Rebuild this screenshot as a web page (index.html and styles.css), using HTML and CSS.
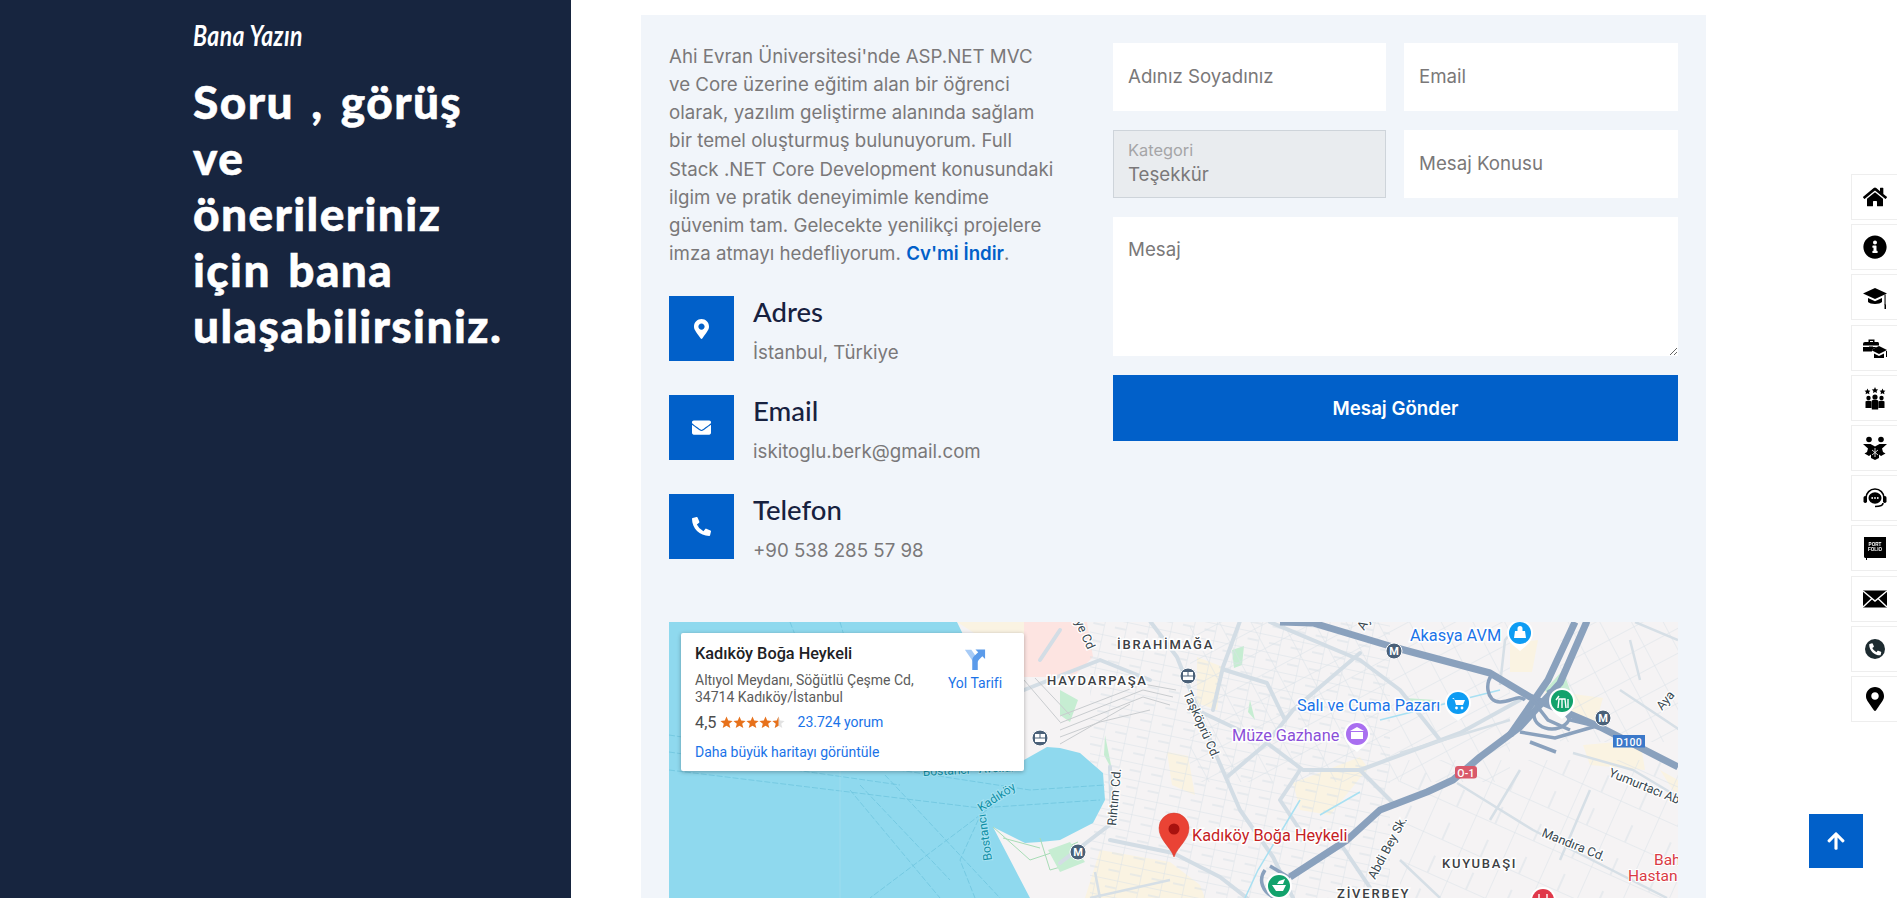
FILE: index.html
```html
<!DOCTYPE html>
<html lang="tr">
<head>
<meta charset="utf-8">
<title>İletişim</title>
<link rel="stylesheet" href="styles.css">
</head>
<body>
<div class="page">
  <aside class="side">
    <div class="eyebrow">Bana Yazın</div>
    <h1 class="side-title">Soru , görüş<br>ve<br>önerileriniz<br>için bana<br>ulaşabilirsiniz.</h1>
  </aside>
  <main class="main">
    <section class="card">
      <div class="top">
        <div class="about">
          <p class="bio">Ahi Evran Üniversitesi'nde ASP.NET MVC ve Core üzerine eğitim alan bir öğrenci olarak, yazılım geliştirme alanında sağlam bir temel oluşturmuş bulunuyorum. Full Stack .NET Core Development konusundaki ilgim ve pratik deneyimimle kendime güvenim tam. Gelecekte yenilikçi projelere imza atmayı hedefliyorum. <a class="cv" href="#">Cv'mi İndir</a>.</p>
          <div class="contacts">
            <div class="contact">
              <div class="c-icon"><svg class="ci-pin" viewBox="0 0 384 512"><path d="M172.268 501.67C26.97 291.031 0 269.413 0 192 0 85.961 85.961 0 192 0s192 85.961 192 192c0 77.413-26.97 99.031-172.268 309.67-9.535 13.774-29.93 13.773-39.464 0zM192 272c44.183 0 80-35.817 80-80s-35.817-80-80-80-80 35.817-80 80 35.817 80 80 80z"/></svg></div>
              <div><h4 class="c-title">Adres</h4><div class="c-text">İstanbul, Türkiye</div></div>
            </div>
            <div class="contact">
              <div class="c-icon"><svg class="ci-box" viewBox="0 0 512 512"><path d="M502.3 190.8c3.9-3.1 9.7-.2 9.7 4.7V400c0 26.5-21.5 48-48 48H48c-26.5 0-48-21.5-48-48V195.6c0-5 5.7-7.8 9.7-4.7 22.4 17.4 52.1 39.5 154.1 113.6 21.1 15.4 56.7 47.8 92.2 47.6 35.7.3 72-32.8 92.3-47.6 102-74.1 131.6-96.3 154-113.7zM256 320c23.2.4 56.6-29.2 73.4-41.4 132.7-96.3 142.8-104.7 173.4-128.7 5.8-4.5 9.2-11.5 9.2-18.9v-19c0-26.5-21.5-48-48-48H48C21.5 64 0 85.5 0 112v19c0 7.4 3.4 14.3 9.2 18.9 30.6 23.9 40.7 32.4 173.4 128.7 16.8 12.2 50.2 41.8 73.4 41.4z"/></svg></div>
              <div><h4 class="c-title">Email</h4><div class="c-text">iskitoglu.berk@gmail.com</div></div>
            </div>
            <div class="contact">
              <div class="c-icon"><svg class="ci-box" viewBox="0 0 512 512"><path d="M497.39 361.8l-112-48a24 24 0 0 0-28 6.9l-49.6 60.6A370.66 370.66 0 0 1 130.6 204.11l60.6-49.6a23.94 23.94 0 0 0 6.9-28l-48-112A24.16 24.16 0 0 0 122.6.61l-104 24A24 24 0 0 0 0 48c0 256.5 207.9 464 464 464a24 24 0 0 0 23.4-18.6l24-104a24.29 24.29 0 0 0-14.01-27.6z"/></svg></div>
              <div><h4 class="c-title">Telefon</h4><div class="c-text">+90 538 285 57 98</div></div>
            </div>
          </div>
        </div>
        <form class="form">
          <input class="field" type="text" placeholder="Adınız Soyadınız">
          <input class="field" type="text" placeholder="Email">
          <div class="select-box"><span class="select-label">Kategori</span><span class="select-value">Teşekkür</span></div>
          <input class="field" type="text" placeholder="Mesaj Konusu">
          <textarea class="field area" placeholder="Mesaj"></textarea>
          <button class="send" type="button">Mesaj Gönder</button>
        </form>
      </div>

      <div class="map">
        <svg class="map-svg" viewBox="669 622 1009 276" xmlns="http://www.w3.org/2000/svg">
          <defs>
            <pattern id="streetsA" width="22" height="17" patternUnits="userSpaceOnUse" patternTransform="rotate(12)">
              <path class="st" d="M0 0H22M0 0V17M11 8H22"/>
            </pattern>
            <pattern id="streetsB" width="28" height="22" patternUnits="userSpaceOnUse" patternTransform="rotate(-28)">
              <path class="st" d="M0 0H28M0 0V22"/>
            </pattern>
            <pattern id="streetsC" width="42" height="36" patternUnits="userSpaceOnUse" patternTransform="rotate(24)">
              <path class="st" d="M0 0H42M0 0V36M21 18V36"/>
            </pattern>
          </defs>
          <rect class="land" x="669" y="622" width="1009" height="276"/>
          <path class="pink" d="M1024 622H1087L1093 657L1073 677H1024Z"/>
          <path class="beige" d="M957 622H1024V640H985Z"/>
          <path class="beige" d="M1197 657L1223 667L1217 710L1197 703ZM1167 752L1188 756L1195 795L1172 785ZM1293 783L1360 757L1368 768L1330 815L1300 810ZM1100 850L1170 862L1200 885L1205 898H1085ZM1510 643L1538 640L1532 672L1510 672ZM1543 690L1603 698L1596 722L1560 712ZM1583 745L1640 740L1645 770L1590 765ZM1660 770L1678 780V798Z"/>
          <path class="green" d="M1232 650L1244 646L1242 665L1234 668ZM1405 698L1435 700L1420 712ZM1060 690L1078 700L1070 722L1060 715ZM1250 700L1255 720L1248 712ZM1105 735L1112 770L1104 755ZM1563 670L1570 690L1552 700L1545 690Z"/>
          <g>
            <rect class="fill-a" x="1090" y="622" width="300" height="276"/>
            <rect class="fill-b" x="1190" y="622" width="320" height="160"/>
            <rect class="fill-c" x="1400" y="760" width="278" height="138"/>
            <rect class="fill-b" x="1560" y="622" width="118" height="120"/>
          </g>

          <path class="water" d="M669 622H957L1024 760L1047 747L1060 748L1080 753L1103 773L1105 800L1093 823L1060 840L1040 842L1025 843L993 827L1030 898H669Z"/>
          <path class="ferry" d="M669 735L1030 790L1105 785M669 770L980 808L1100 800M850 790L940 898M885 775L1000 898M860 785L950 880M1000 800L870 898M985 805L960 860L975 898M669 752L900 785M840 622L860 690M790 622L805 660"/>
          <path class="ferry-v" d="M840 770V898"/>
          <path class="shore" d="M993 827L1030 860L1060 850L1078 842M1003 838L1040 848M1040 838L1050 870L1078 862"/>
          <path class="green2" d="M1048 850L1070 842L1085 862L1060 872Z"/>

          <g class="road-l">
            <path d="M1150 621L1177 657L1217 757L1240 810L1273 857L1293 898"/>
            <path d="M1240 621L1223 667L1213 710"/>
            <path d="M1360 653L1293 710L1267 743L1227 777"/>
            <path d="M1203 713L1267 743L1303 770L1360 770"/>
            <path d="M1360 770L1460 733L1520 700"/>
            <path d="M1110 840L1173 853L1220 877L1247 898"/>
            <path d="M1110 767L1112 823L1060 863"/>
            <path d="M1360 770L1393 803M1300 770L1280 800L1300 830M1340 843L1377 898"/>
            <path d="M1225 670L1267 683L1285 720M1270 622L1360 660L1400 690L1440 740"/>
            <path d="M1040 660L1060 630M1024 690L1100 660L1150 680"/>
          </g>
          <g class="road-m">
            <path d="M1457 783L1533 830L1667 898"/>
            <path d="M1573 753L1633 770L1678 797"/>
            <path d="M1400 753L1510 720"/>
            <path d="M1500 685L1505 640L1520 622M1635 622L1678 640M1630 640L1640 680M1680 730L1620 690"/>
            <path d="M1170 880L1090 898M1095 872L1100 898M1400 860L1440 898M1520 770L1490 820M1590 790L1560 860"/>
          </g>
          <path class="rail" d="M1060 723L1143 690L1173 697M1060 730L1143 697L1170 705M1060 716L1143 684L1176 690M1060 737L1100 722L1150 710M1024 680L1060 722M1035 678L1070 715M1060 744L1130 704"/>
          <path class="river" d="M1245 898L1258 870L1300 800M1360 792L1320 815M1380 720L1500 690"/>

          <g class="hw">
            <path d="M1280 622L1313 623L1393 647L1490 673L1530 697L1600 727L1678 767"/>
            <path d="M1290 877L1347 840L1380 810L1427 792L1453 780L1480 757L1520 727L1560 683L1587 621"/>
            <path d="M1575 622L1548 680L1510 735"/>
          </g>
          <g class="hw-t">
            <path d="M1494 673C1484 680 1486 702 1500 702C1512 702 1518 694 1525 700"/>
            <ellipse cx="1552" cy="715" rx="18" ry="14"/>
            <path d="M1520 732L1555 738L1600 725M1530 697L1548 720L1570 730M1548 690L1570 720L1600 727M1530 742L1556 752"/>
            <path d="M1265 870C1258 880 1262 892 1275 898M1270 866L1290 878"/>
          </g>

          <text class="l-area" x="1117" y="649">İBRAHİMAĞA</text>
          <text class="l-area" x="1047" y="685">HAYDARPAŞA</text>
          <text class="l-area" x="1442" y="868">KUYUBAŞI</text>
          <text class="l-area" x="1337" y="898">ZİVERBEY</text>

          <text class="l-blue" x="1410" y="641">Akasya AVM</text>
          <text class="l-blue" x="1297" y="711">Salı ve Cuma Pazarı</text>
          <text class="l-purple" x="1232" y="741">Müze Gazhane</text>
          <text class="l-red" x="1192" y="841">Kadıköy Boğa Heykeli</text>
          <text class="l-hosp" x="1654" y="865">Bahçeşehir</text>
          <text class="l-hosp" x="1628" y="881">Hastanesi</text>

          <text class="l-road" transform="translate(1183 693) rotate(66)">Taşköprü Cd.</text>
          <text class="l-road" transform="translate(1116 826) rotate(-85)">Rıhtım Cd.</text>
          <text class="l-road" transform="translate(1375 880) rotate(-62)">Abdi Bey Sk.</text>
          <text class="l-road" transform="translate(1075 622) rotate(66)">ye Cd</text>
          <text class="l-road" transform="translate(1364 631) rotate(-60)">Ay</text>
          <text class="l-road" transform="translate(1662 711) rotate(-50)">Aya</text>
          <text class="l-road" transform="translate(1608 776) rotate(22)">Yumurtacı Abdi</text>
          <text class="l-road" transform="translate(1541 836) rotate(22)">Mandıra Cd.</text>
          <text class="l-sea" transform="translate(923 776) rotate(-3)">Bostancı - Avcılar</text>
          <text class="l-sea" transform="translate(981 812) rotate(-33)">Kadıköy</text>
          <text class="l-sea" transform="translate(992 860) rotate(-98)">Bostancı</text>

          <g class="badge-b"><rect x="1613" y="735" width="32" height="12.5"/><text class="badge-t" x="1629" y="745.5">D100</text></g>
          <g class="badge-r"><rect x="1455" y="766" width="22" height="12.5" rx="3"/><text class="badge-t" x="1466" y="776.5">O-1</text></g>

          <g class="metro">
            <circle cx="1394" cy="651" r="8"/><circle cx="1603" cy="718" r="8"/><circle cx="1078" cy="852" r="8"/>
            <text class="m-t" x="1394" y="655">M</text><text class="m-t" x="1603" y="722">M</text><text class="m-t" x="1078" y="856">M</text>
            <circle cx="1188" cy="676" r="8"/><circle cx="1040" cy="738" r="8"/>
            <path class="train" d="M1183 672H1193V680H1183ZM1035 734H1045V742H1035Z"/>
            <path class="train-l" d="M1183 676H1193M1188 672V676M1035 738H1045M1040 734V738"/>
          </g>

          <g>
            <path class="pin-w" d="M1507 633A13 13 0 0 1 1533 633C1533 641 1526 646 1520 651C1514 646 1507 641 1507 633Z"/>
            <circle class="p-blue" cx="1520" cy="633" r="11"/>
            <path class="p-ic" d="M1515 631H1525L1526 638H1514ZM1517.5 631V628.5A2.5 2.5 0 0 1 1522.5 628.5V631" />
            <path class="pin-w" d="M1445 703A13 13 0 0 1 1471 703C1471 711 1464 716 1458 721C1452 716 1445 711 1445 703Z"/>
            <circle class="p-blue" cx="1458" cy="703" r="11"/>
            <path class="p-ic" d="M1452 698H1454L1456 705H1463L1465 700H1455Z"/><circle class="p-ic" cx="1456.5" cy="708" r="1.4"/><circle class="p-ic" cx="1462" cy="708" r="1.4"/>
            <path class="pin-w" d="M1344 734A13 13 0 0 1 1370 734C1370 742 1363 747 1357 752C1351 747 1344 742 1344 734Z"/>
            <circle class="p-purple" cx="1357" cy="734" r="11"/>
            <path class="p-ic" d="M1350 731L1357 727L1364 731ZM1351 732H1363V739H1351Z"/>
            <path class="pin-w" d="M1549 701A13 13 0 0 1 1575 701C1575 709 1568 714 1562 719C1556 714 1549 709 1549 701Z"/>
            <circle class="p-green" cx="1562" cy="701" r="11"/>
            <path class="p-ln" d="M1558 708L1559 699H1565L1566 708M1562 699V708M1556 700L1559 696M1568 699V708"/>
            <circle class="pin-w" cx="1279" cy="886" r="13"/>
            <circle class="p-green" cx="1279" cy="886" r="11"/>
            <path class="p-ic" d="M1272 885H1286L1283 891H1276ZM1279 881L1285 879L1283 884H1277Z"/>
            <circle class="pin-w" cx="1543" cy="900" r="13"/>
            <circle class="p-red" cx="1543" cy="900" r="11"/>
            <path class="p-ln" d="M1539 894V898M1547 894V898"/>
          </g>

          <path class="marker" d="M1174 857C1170 846 1159 840 1159 828A15 15 0 0 1 1189 828C1189 840 1178 846 1174 857Z"/>
          <circle class="marker-dot" cx="1174" cy="829" r="5.5"/>
        </svg>

        <div class="place">
          <div class="place-main">
            <div class="place-name">Kadıköy Boğa Heykeli</div>
            <div class="place-addr">Altıyol Meydanı, Söğütlü Çeşme Cd,<br>34714 Kadıköy/İstanbul</div>
            <div class="rating">
              <span class="rate">4,5</span>
              <svg class="stars" viewBox="0 0 65 13">
                <path class="s-on" d="M6.5 0.5L8.2 4.6L12.6 5L9.2 7.8L10.3 12.1L6.5 9.8L2.7 12.1L3.8 7.8L0.4 5L4.8 4.6Z"/>
                <path class="s-on" d="M19.5 0.5L21.2 4.6L25.6 5L22.2 7.8L23.3 12.1L19.5 9.8L15.7 12.1L16.8 7.8L13.4 5L17.8 4.6Z"/>
                <path class="s-on" d="M32.5 0.5L34.2 4.6L38.6 5L35.2 7.8L36.3 12.1L32.5 9.8L28.7 12.1L29.8 7.8L26.4 5L30.8 4.6Z"/>
                <path class="s-on" d="M45.5 0.5L47.2 4.6L51.6 5L48.2 7.8L49.3 12.1L45.5 9.8L41.7 12.1L42.8 7.8L39.4 5L43.8 4.6Z"/>
                <path class="s-off" d="M58.5 0.5L60.2 4.6L64.6 5L61.2 7.8L62.3 12.1L58.5 9.8L54.7 12.1L55.8 7.8L52.4 5L56.8 4.6Z"/>
                <path class="s-on" d="M58.5 0.5V9.8L54.7 12.1L55.8 7.8L52.4 5L56.8 4.6Z"/>
              </svg>
              <a class="g-link reviews" href="#">23.724 yorum</a>
            </div>
            <a class="g-link bigger" href="#">Daha büyük haritayı görüntüle</a>
          </div>
          <a class="dirs" href="#">
            <svg class="dirs-ic" viewBox="0 0 24 24"><path class="d-a" d="M1 2H8L13 9L10 15Z"/><path class="d-b" d="M9 24V14C9 11 10 10 12 8L15.5 4.5L12.5 1.5H23V12L20 9L16.5 12.5C15.5 13.5 15 14.5 15 16V24Z"/></svg>
            <span>Yol Tarifi</span>
          </a>
        </div>
      </div>
    </section>
  </main>
</div>

<nav class="rail-nav">
  <a class="rail-item"><svg class="ri" viewBox="0 0 576 512"><path d="M280.37 148.26L96 300.11V464a16 16 0 0 0 16 16l112.06-.29a16 16 0 0 0 15.92-16V368a16 16 0 0 1 16-16h64a16 16 0 0 1 16 16v95.64a16 16 0 0 0 16 16.05L464 480a16 16 0 0 0 16-16V300L295.67 148.26a12.19 12.19 0 0 0-15.3 0zM571.6 251.47L488 182.56V44.05a12 12 0 0 0-12-12h-56a12 12 0 0 0-12 12v72.61L318.47 43a48 48 0 0 0-61 0L4.34 251.47a12 12 0 0 0-1.6 16.9l25.5 31A12 12 0 0 0 45.15 301l235.22-193.74a12.19 12.19 0 0 1 15.3 0L530.9 301a12 12 0 0 0 16.9-1.6l25.5-31a12 12 0 0 0-1.7-16.93z"/></svg></a>
  <a class="rail-item"><svg class="ri" viewBox="0 0 512 512"><path d="M256 8C119.043 8 8 119.083 8 256c0 136.997 111.043 248 248 248s248-111.003 248-248C504 119.083 392.957 8 256 8zm0 110c23.196 0 42 18.804 42 42s-18.804 42-42 42-42-18.804-42-42 18.804-42 42-42zm56 254c0 6.627-5.373 12-12 12h-88c-6.627 0-12-5.373-12-12v-24c0-6.627 5.373-12 12-12h12v-64h-12c-6.627 0-12-5.373-12-12v-24c0-6.627 5.373-12 12-12h64c6.627 0 12 5.373 12 12v100h12c6.627 0 12 5.373 12 12v24z"/></svg></a>
  <a class="rail-item"><svg class="ri" viewBox="0 0 24 24"><path d="M12 3L0 8.5L12 14L24 8.5Z"/><path d="M5 13V17C7 19.5 17 19.5 19 17V13L12 16.2Z"/><path d="M21.5 10V19.5H23V24H21.5Z"/><path d="M21.5 9.5H22.6V20H21.5Z"/></svg></a>
  <a class="rail-item"><svg class="ri" viewBox="0 0 24 24"><path d="M3 6H15A2 2 0 0 1 16 8V9.5H0V8A2 2 0 0 1 2 6ZM5.5 6V3.5H11.5V6H10V5H7V6ZM0 11H6V10.5H10V11H14L9 13.5V15.5H0Z"/><path d="M16 10L24 14L16 18L8 14Z"/><path d="M11 17.5V22H21V17.5L16 20Z"/><path d="M23 15V21H24V15Z"/></svg></a>
  <a class="rail-item"><svg class="ri" viewBox="0 0 24 24"><path d="M12 1L13 3.2L15.2 3.4L13.6 4.9L14 7L12 6L10 7L10.4 4.9L8.8 3.4L11 3.2ZM4.5 2.5L5.4 4.5L7.5 4.7L6 6.1L6.4 8.2L4.5 7.2L2.6 8.2L3 6.1L1.5 4.7L3.6 4.5ZM19.5 2.5L20.4 4.5L22.5 4.7L21 6.1L21.4 8.2L19.5 7.2L17.6 8.2L18 6.1L16.5 4.7L18.6 4.5Z"/><circle cx="5.5" cy="12" r="2.2"/><circle cx="18.5" cy="12" r="2.2"/><circle cx="12" cy="11" r="2.6"/><path d="M2.5 15.5C3 14.5 8 14.5 8.5 15.5V22H2.5ZM15.5 15.5C16 14.5 21 14.5 21.5 15.5V22H15.5ZM8.8 14.5C9.5 13.5 14.5 13.5 15.2 14.5V23.5H8.8Z"/></svg></a>
  <a class="rail-item"><svg class="ri" viewBox="0 0 24 24"><circle cx="6" cy="3.5" r="2.8"/><circle cx="18" cy="3.5" r="2.8"/><path d="M0 8H7.5L12 10.5L16.5 8H24L19 12.5L20 16L22.5 17.5L18 20L16 18.5V22L12 24L8 22V18.5L6 20L1.5 17.5L4 16L5 12.5Z"/><path class="ri-w" d="M9 14L15 19M15 14L9 19M12 12V21"/></svg></a>
  <a class="rail-item"><svg class="ri" viewBox="0 0 24 24"><path class="ri-s" d="M3 12A9 9 0 0 1 21 12"/><rect x="0.5" y="10" width="3.5" height="7" rx="1.7"/><rect x="20" y="10" width="3.5" height="7" rx="1.7"/><ellipse cx="12" cy="12" rx="6.5" ry="5.8"/><circle class="ri-wf" cx="9.2" cy="12" r=".9"/><circle class="ri-wf" cx="12" cy="12" r=".9"/><circle class="ri-wf" cx="14.8" cy="12" r=".9"/><path class="ri-s" d="M20 17C20 20 16 20.5 12 20.5"/></svg></a>
  <a class="rail-item"><svg class="ri" viewBox="0 0 24 24"><path d="M1 1H23V22H4V24H3V22C2 22 1 21.5 1 20.5Z"/><text class="ri-t" x="12" y="9.5">PORT</text><text class="ri-t" x="12" y="14.5">FOLIO</text></svg></a>
  <a class="rail-item"><svg class="ri" viewBox="0 0 24 24"><path d="M0 3.5H24V20.5H0Z"/><path class="ri-w2" d="M0 4L12 14L24 4M0 20L9 11.5M24 20L15 11.5"/></svg></a>
  <a class="rail-item"><svg class="ri" viewBox="0 0 24 24"><circle class="ri-dark" cx="12" cy="12" r="10"/><path class="ri-wf" transform="translate(6.2 6.3) scale(0.0235)" d="M497.39 361.8l-112-48a24 24 0 0 0-28 6.9l-49.6 60.6A370.66 370.66 0 0 1 130.6 204.11l60.6-49.6a23.94 23.94 0 0 0 6.9-28l-48-112A24.16 24.16 0 0 0 122.6.61l-104 24A24 24 0 0 0 0 48c0 256.5 207.9 464 464 464a24 24 0 0 0 23.4-18.6l24-104a24.29 24.29 0 0 0-14.01-27.6z"/></svg></a>
  <a class="rail-item"><svg class="ri" viewBox="0 0 384 512"><path d="M172.268 501.67C26.97 291.031 0 269.413 0 192 0 85.961 85.961 0 192 0s192 85.961 192 192c0 77.413-26.97 99.031-172.268 309.67-9.535 13.774-29.93 13.773-39.464 0zM192 272c44.183 0 80-35.817 80-80s-35.817-80-80-80-80 35.817-80 80 35.817 80 80 80z"/></svg></a>
</nav>

<a class="to-top" href="#"><svg class="tt-ic" viewBox="0 0 448 512"><path d="M34.9 289.5l-22.2-22.2c-9.4-9.4-9.4-24.6 0-33.9L207 39c9.4-9.4 24.6-9.4 33.9 0l194.3 194.3c9.4 9.4 9.4 24.6 0 33.9L413 289.4c-9.5 9.5-25 9.3-34.3-.4L264 168.6V456c0 13.3-10.7 24-24 24h-32c-13.3 0-24-10.7-24-24V168.6L69.2 289.1c-9.3 9.8-24.8 10-34.3.4z"/></svg></a>
</body>
</html>
```
FILE: styles.css
```css
* { box-sizing: border-box; }
html, body { margin: 0; height: 100%; overflow: hidden; background: #fff; }
body { font-family: "Inter", "Liberation Sans", sans-serif; color: #7a7879; font-size: 18.7px; }
a { text-decoration: none; }

.page { display: flex; height: 898px; overflow: hidden; }

.side { flex: 0 0 571px; background: #17253f; color: #fff; padding: 20px 0 0 193px; }
.eyebrow { font-family: "Lato", sans-serif; font-style: italic; font-weight: 700; font-size: 28px; line-height: 30px; color: #fff; letter-spacing: 0.5px; transform: scaleX(.82); transform-origin: left; white-space: nowrap; }
.side-title { margin: 24px 0 0; font-family: "Lato", sans-serif; font-weight: 900; font-size: 46px; line-height: 56px; letter-spacing: 1.4px; word-spacing: 5px; color: #fff; white-space: nowrap; -webkit-text-stroke: .5px #fff; }

.main { flex: 1; padding: 15px 0 0 70px; min-width: 0; }
.card { width: 1065px; background: #f1f5fa; padding: 28px; height: 900px; }
.top { display: flex; justify-content: space-between; }

.about { width: 416px; }
.bio { margin: 0; width: 385px; line-height: 28.16px; }
.cv { color: #0160c9; font-weight: 600; }

.contacts { display: flex; flex-direction: column; gap: 34px; margin-top: 28px; }
.contact { display: flex; gap: 19px; height: 65px; }
.c-icon { flex: 0 0 65px; height: 65px; background: #0160c9; display: flex; align-items: center; justify-content: center; fill: #fff; }
.ci-pin { width: 15px; height: 20px; }
.ci-box { width: 19px; height: 19px; }
.c-title { margin: 0 0 11px; font-family: "Lato", sans-serif; font-weight: 500; font-size: 27.5px; line-height: 32px; color: #17213f; }
.c-text { line-height: 28px; }

.form { width: 565px; display: grid; grid-template-columns: 273px 274px; column-gap: 18px; row-gap: 19px; align-content: start; }
.field { border: 0; border-radius: 0; background: #fff; height: 68px; padding: 0 15px 2px; font: 400 18.7px "Inter", sans-serif; color: #7a7879; outline: 0; display: block; width: 100%; }
.field::placeholder { color: #7a7879; opacity: 1; }
.area { grid-column: 1 / -1; height: 139px; padding-top: 21px; resize: vertical; }
.select-box { height: 68px; background: #e9ecef; border: 1px solid #ced4da; padding: 9px 14px 0; display: flex; flex-direction: column; }
.select-label { font-size: 16.4px; line-height: 20px; color: #a5a5a7; }
.select-value { line-height: 28px; color: #7a7879; margin-top: 1px; }
.send { grid-column: 1 / -1; height: 66px; border: 0; background: #0160c9; color: #fff; font: 600 18.7px "Inter", sans-serif; }

.map { position: relative; margin-top: 63px; height: 276px; overflow: hidden; background: #f5f3f3; }
.map-svg { display: block; width: 1009px; height: 276px; font-family: "Roboto", sans-serif; }

.land { fill: #f5f3f4; }
.pink { fill: #fde4e1; }
.beige { fill: #faf3e2; }
.green { fill: #c6edd2; }
.green2 { fill: #c6edd2; }
.st { fill: none; stroke: #d9e1e7; stroke-width: 1; }
.fill-a { fill: url(#streetsA); }
.fill-b { fill: url(#streetsB); }
.fill-c { fill: url(#streetsC); }
.water { fill: #8fd9ee; }
.ferry { fill: none; stroke: #6fc5de; stroke-width: .8; stroke-dasharray: 6 2; }
.ferry-v { fill: none; stroke: #a9dfee; stroke-width: .6; }
.shore { fill: none; stroke: #a8dcb6; stroke-width: 1; }
.road-l path { fill: none; stroke: #d3dde5; stroke-width: 4; stroke-linejoin: round; stroke-linecap: round; }
.road-m path { fill: none; stroke: #d6dfe6; stroke-width: 2.5; stroke-linejoin: round; }
.rail { fill: none; stroke: #c9cccf; stroke-width: 1; }
.river { fill: none; stroke: #a8e0f2; stroke-width: 1.5; }
.hw path { fill: none; stroke: #8aa1bd; stroke-width: 7; stroke-linejoin: round; }
.hw-t path, .hw-t ellipse { fill: none; stroke: #8aa1bd; stroke-width: 3.5; }

.l-area { font-size: 13px; font-weight: 500; letter-spacing: 1.8px; fill: #3c4043; stroke: #fff; stroke-width: 3px; paint-order: stroke; }
.l-blue { font-size: 16.3px; fill: #1a73e8; stroke: #fff; stroke-width: 3px; paint-order: stroke; }
.l-purple { font-size: 16.3px; fill: #8a4fd8; stroke: #fff; stroke-width: 3px; paint-order: stroke; }
.l-red { font-size: 16.3px; fill: #c5221f; stroke: #fff; stroke-width: 3px; paint-order: stroke; }
.l-hosp { font-size: 15.5px; fill: #d93a44; stroke: #fff; stroke-width: 2px; paint-order: stroke; }
.l-road { font-size: 12.5px; fill: #37474f; stroke: #fff; stroke-width: 2.5px; paint-order: stroke; }
.l-sea { font-size: 12px; fill: #0f8fa5; stroke: #a8e3f3; stroke-width: 2px; paint-order: stroke; }
.badge-b rect { fill: #3b78c9; }
.badge-r rect { fill: #d9596a; }
.badge-t { font-size: 10.5px; font-weight: 500; fill: #fff; text-anchor: middle; letter-spacing: .3px; }
.metro circle { fill: #4a6078; stroke: #fff; stroke-width: 1; }
.m-t { font-size: 11px; font-weight: 700; fill: #fff; text-anchor: middle; }
.train { fill: #fff; }
.train-l { stroke: #4a6078; stroke-width: 1; fill: none; }
.pin-w { fill: #fff; }
.p-blue { fill: #0e9cf3; }
.p-purple { fill: #a96ff0; }
.p-green { fill: #12a26c; }
.p-red { fill: #e0384a; }
.p-ic { fill: #fff; }
.p-ln { fill: none; stroke: #fff; stroke-width: 1.4; }
.marker { fill: #ea4335; stroke: #d33527; stroke-width: .5; }
.marker-dot { fill: #a8120f; }

.place { position: absolute; left: 12px; top: 11px; width: 343px; height: 138px; background: #fff; border-radius: 2px; box-shadow: 0 1px 4px rgba(0,0,0,.3); padding: 11px 12px 0 14px; display: flex; justify-content: space-between; font-family: "Roboto", sans-serif; font-size: 14px; color: #5b5b5b; }
.place-name { font-size: 16.3px; font-weight: 500; line-height: 20px; color: #202124; }
.place-addr { line-height: 17px; margin-top: 8px; }
.rating { display: flex; align-items: center; margin-top: 6px; height: 20px; }
.rate { font-size: 16.3px; color: #4d4d4d; }
.stars { width: 65px; height: 13px; margin-left: 3px; }
.s-on { fill: #e7711b; }
.s-off { fill: #e2e2e2; }
.g-link { color: #1a73e8; }
.reviews { margin-left: 13px; }
.bigger { display: block; margin-top: 12px; line-height: 17px; }
.dirs { width: 70px; display: flex; flex-direction: column; align-items: center; color: #1a73e8; margin: 4px 2px 0 0; }
.dirs-ic { width: 22px; height: 22px; margin-bottom: 5px; }
.d-a { fill: #a7cbf6; }
.d-b { fill: #5b9bea; }

.rail-nav { position: fixed; top: 174px; right: -2px; display: flex; flex-direction: column; gap: 4.2px; }
.rail-item { width: 48px; height: 46px; background: #fff; border: 1px solid #eeeeee; display: flex; align-items: center; justify-content: center; }
.ri { width: 24px; height: 24px; fill: #000; overflow: visible; }
.ri-w { fill: none; stroke: #fff; stroke-width: .8; }
.ri-w2 { fill: none; stroke: #fff; stroke-width: 1.4; }
.ri-s { fill: none; stroke: #000; stroke-width: 1.6; }
.ri-wf { fill: #fff; }
.ri-dark { fill: #1d2b30; }
.ri-t { font: 700 4.6px "Liberation Sans", sans-serif; fill: #fff; text-anchor: middle; }

.to-top { position: fixed; left: 1809px; top: 814px; width: 54px; height: 54px; background: #0160c9; display: flex; align-items: center; justify-content: center; fill: #fff; }
.tt-ic { width: 18px; height: 20px; }
```
